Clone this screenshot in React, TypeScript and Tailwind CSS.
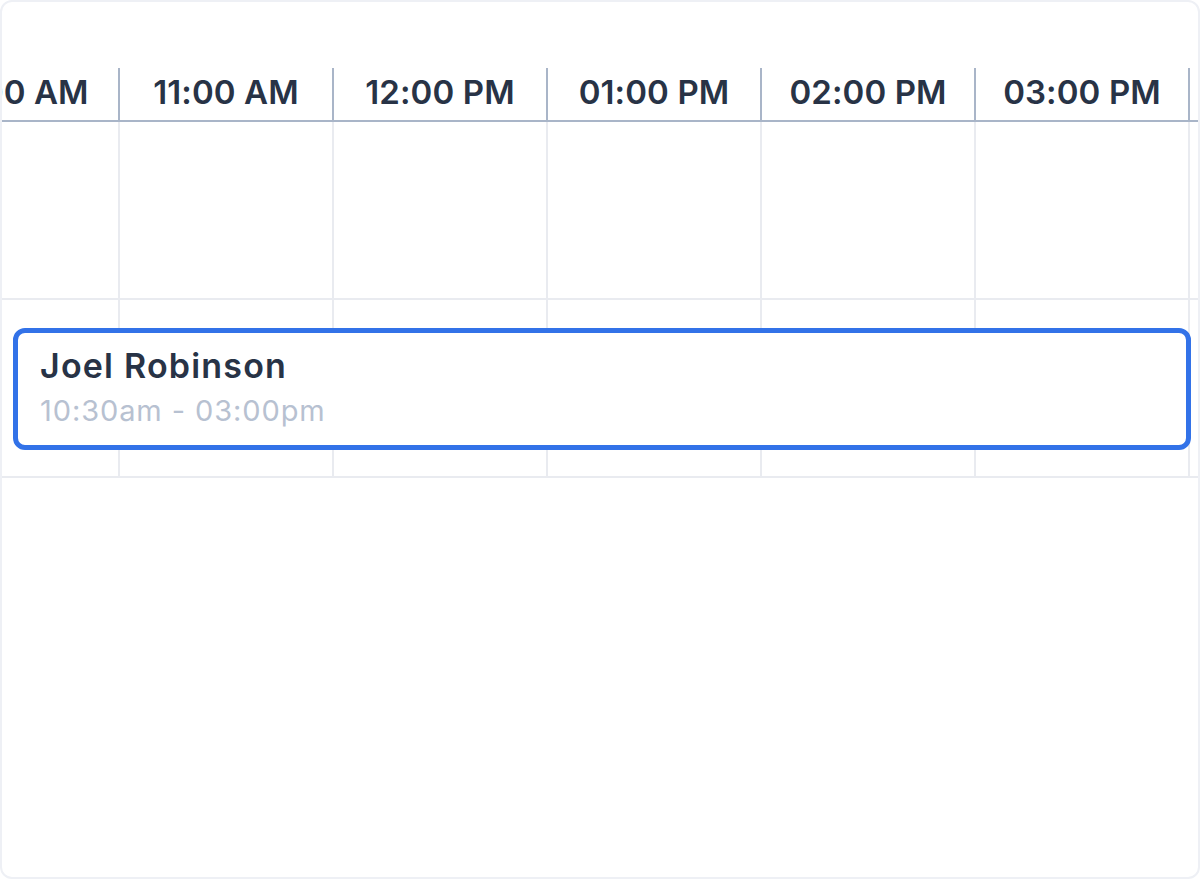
const hours = ['10:00 AM', '11:00 AM', '12:00 PM', '01:00 PM', '02:00 PM', '03:00 PM', '04:00 PM'];

export default function App() {
  return (
    <div className="h-[879px] w-[1200px] overflow-hidden rounded-[12px] border-2 border-[#eef0f5] bg-white font-['Inter',sans-serif]">
      <div className="overflow-hidden pt-[66px]">
        <div className="relative -ml-[96px] flex w-max">
          {hours.map((h) => (
            <div key={h} className="flex w-[214px] shrink-0 flex-col">
              <div className="flex h-[54px] items-center justify-center border-b-2 border-r-2 border-[#a9b5c8] pb-[2px]">
                <span className="whitespace-nowrap text-[33px] font-semibold tracking-[0.1px] text-[#283346]">{h}</span>
              </div>
              <div className="h-[178px] border-b-2 border-r-2 border-[#e9ebf0]" />
              <div className="h-[178px] border-b-2 border-r-2 border-[#e9ebf0]" />
            </div>
          ))}

          <div className="absolute left-[107px] top-[260px] flex h-[122px] w-[1178px] flex-col rounded-[12px] border-[5px] border-[#3272e8] bg-white pl-[22px] pt-[13px]">
            <span className="text-[34px] font-semibold leading-[40px] tracking-[1.2px] text-[#283346]">Joel Robinson</span>
            <span className="mt-[7px] text-[29px] leading-[36px] tracking-[0.9px] text-[#b7c1d1]">10:30am - 03:00pm</span>
          </div>
        </div>
      </div>
    </div>
  );
}
